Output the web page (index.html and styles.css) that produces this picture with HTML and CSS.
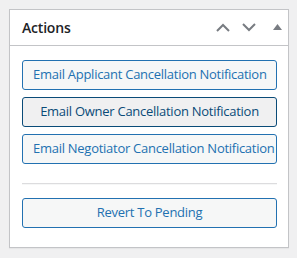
FILE: index.html
```html
<!DOCTYPE html>
<html>
<head>
<meta charset="utf-8">
<link rel="stylesheet" href="styles.css">
</head>
<body>
<div class="postbox">
  <div class="postbox-header">
    <h2 class="hndle">Actions</h2>
    <div class="handle-actions">
      <span class="handle-btn">
        <svg width="14" height="9" viewBox="0 0 14 9"><path d="M1 8 L7 2 L13 8" fill="none" stroke="#787c82" stroke-width="2"/></svg>
      </span>
      <span class="handle-btn">
        <svg width="14" height="9" viewBox="0 0 14 9"><path d="M1 1 L7 7 L13 1" fill="none" stroke="#787c82" stroke-width="2"/></svg>
      </span>
      <span class="handle-btn toggle">
        <svg width="9" height="6" viewBox="0 0 9 6"><path d="M0 6 L4.5 0 L9 6 Z" fill="#787c82"/></svg>
      </span>
    </div>
  </div>
  <div class="inside">
    <div class="btn-group">
      <button class="button">Email Applicant Cancellation Notification</button>
      <button class="button focus">Email Owner Cancellation Notification</button>
      <button class="button">Email Negotiator Cancellation Notification</button>
    </div>
    <hr class="sep">
    <button class="button">Revert To Pending</button>
  </div>
</div>
</body>
</html>
```
FILE: styles.css
```css
html, body {
  margin: 0;
  padding: 0;
  background: #f0f0f1;
}
body {
  padding: 9px;
  font-family: "Open Sans", "Noto Sans", sans-serif;
  color: #1d2327;
}
.postbox {
  width: 280px;
  height: 239px;
  box-sizing: border-box;
  background: #fff;
  border: 1px solid #c3c4c7;
  box-shadow: 0 1px 1px rgba(0,0,0,.04);
}
.postbox-header {
  height: 36px;
  box-sizing: border-box;
  border-bottom: 1px solid #c3c4c7;
  display: flex;
  align-items: center;
  justify-content: space-between;
  padding-left: 12px;
}
.hndle {
  margin: 0;
  font-size: 14px;
  font-weight: 600;
  line-height: 1.4;
  letter-spacing: -0.2px;
}
.handle-actions {
  display: flex;
  align-items: center;
  gap: 0;
}
.handle-btn {
  display: flex;
  align-items: center;
  justify-content: center;
  width: 26px;
  height: 35px;
}
.handle-btn.toggle {
  width: 22px;
  margin-left: 4px;
  padding-bottom: 1px;
}
.inside {
  padding: 14px 11px 0 12px;
}
.btn-group {
  display: flex;
  flex-direction: column;
  gap: 7px;
}
.button {
  display: block;
  width: 100%;
  height: 30px;
  box-sizing: border-box;
  padding: 0 10px;
  margin: 0;
  font-family: "Open Sans", "Noto Sans", sans-serif;
  font-size: 13px;
  letter-spacing: -0.27px;
  line-height: 2.15;
  color: #2271b1;
  background: #f6f7f7;
  border: 1px solid #2271b1;
  border-radius: 3px;
  white-space: nowrap;
  overflow: hidden;
  text-align: center;
  cursor: pointer;
}
.button.focus {
  color: #0a4b78;
  border-color: #0a4b78;
  background: #f0f0f1;
}
.sep {
  margin: 19px 0 13px;
  border: 0;
  border-top: 1px solid #dcdcde;
  border-bottom: 1px solid #f6f7f7;
  height: 0;
}
```
